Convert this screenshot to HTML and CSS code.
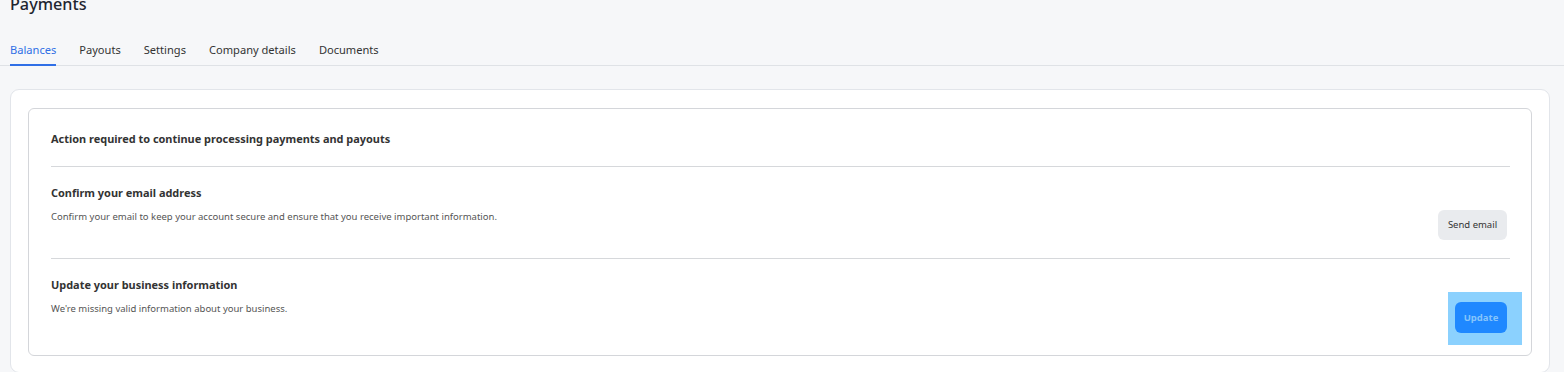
FILE: index.html
```html
<!DOCTYPE html>
<html lang="en">
<head>
<meta charset="utf-8">
<title>Payments</title>
<link rel="stylesheet" href="styles.css">
</head>
<body>
<div class="page">
  <h1 class="title">Payments</h1>
  <nav class="tabs">
    <a class="tab active">Balances</a>
    <a class="tab">Payouts</a>
    <a class="tab">Settings</a>
    <a class="tab">Company details</a>
    <a class="tab">Documents</a>
  </nav>
  <div class="outer-card">
    <div class="inner-card">
      <div class="card-head">Action required to continue processing payments and payouts</div>
      <div class="task">
        <div class="task-title">Confirm your email address</div>
        <div class="task-row">
          <p class="task-desc">Confirm your email to keep your account secure and ensure that you receive important information.</p>
          <button class="btn btn-secondary">Send email</button>
        </div>
      </div>
      <div class="task last">
        <div class="task-title">Update your business information</div>
        <div class="task-row">
          <p class="task-desc">We're missing valid information about your business.</p>
          <div class="highlight-wrap">
            <span class="highlight"></span>
            <button class="btn btn-primary">Update</button>
          </div>
        </div>
      </div>
    </div>
  </div>
</div>
</body>
</html>
```

FILE: styles.css
```css
* { box-sizing: border-box; }
html, body { margin: 0; padding: 0; }
body {
  background: #f6f7f9;
  font-family: "Noto Sans", "Open Sans", sans-serif;
  color: #333;
  overflow: hidden;
}
.page {
  padding: 0 14px 0 10px;
}
.title {
  margin: -9px 0 0 0;
  font-size: 16.2px;
  line-height: 26px;
  font-weight: 500;
  color: #1f2530;
}
.tabs {
  display: flex;
  gap: 23px;
  margin: 22px -14px 0 -10px;
  padding: 0 10px;
  border-bottom: 1px solid #dfe2e6;
}
.tab {
  display: block;
  font-size: 11.1px;
  line-height: 18px;
  padding: 2px 0 5px;
  color: #333;
  border-bottom: 2px solid transparent;
  margin-bottom: -1px;
}
.tab.active {
  color: #2f6fe6;
  border-bottom-color: #2f6fe6;
}
.outer-card {
  margin-top: 23px;
  background: #fff;
  border: 1px solid #e2e5ea;
  border-radius: 9px;
  padding: 18px 17px 16px 17px;
}
.inner-card {
  border: 1px solid #d4d6da;
  border-radius: 6px;
  padding: 21px 21px 22px 22px;
}
.card-head {
  font-size: 10.95px;
  line-height: 18px;
  font-weight: 700;
  color: #333;
  padding-bottom: 18px;
  border-bottom: 1px solid #d6d8db;
}
.task {
  padding: 17px 0 18px;
  border-bottom: 1px solid #d6d8db;
}
.task.last {
  border-bottom: none;
  padding-bottom: 0;
}
.task-title {
  font-size: 10.95px;
  line-height: 18px;
  font-weight: 700;
  color: #333;
}
.task-row {
  display: flex;
  justify-content: space-between;
  align-items: flex-start;
  margin-top: 8px;
}
.task-desc {
  margin: 0;
  font-size: 9.5px;
  line-height: 14px;
  color: #555;
}
.btn {
  font-family: inherit;
  border: none;
  border-radius: 6px;
  font-size: 9.5px;
  line-height: 14px;
  margin-right: 3px;
  cursor: pointer;
}
.btn-secondary {
  background: #e9ebee;
  color: #333;
  width: 69px;
  height: 30px;
  padding: 0;
}
.highlight-wrap {
  position: relative;
  margin-right: 3px;
}
.highlight-wrap .btn { margin-right: 0; position: relative; }
.highlight {
  position: absolute;
  left: -7px;
  top: -10px;
  right: -15px;
  bottom: -12px;
  background: #8bd1fe;
}
.btn-primary {
  background: #1f88ff;
  color: #86c4fb;
  font-weight: 700;
  width: 52px;
  height: 31px;
  padding: 0;
}
```
